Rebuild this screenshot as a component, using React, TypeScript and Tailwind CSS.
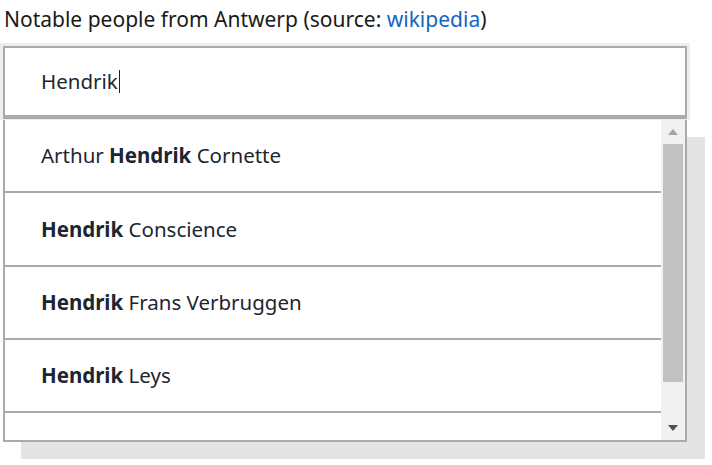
const people = [
  { before: "Arthur ", after: " Cornette" },
  { before: "", after: " Conscience" },
  { before: "", after: " Frans Verbruggen" },
  { before: "", after: " Leys" },
];

const Scrollbar = () => (
  <div className="flex w-[24px] flex-col bg-[#f1f1f1]">
    <div className="flex h-[24px] items-center justify-center">
      <svg width="10" height="6" viewBox="0 0 10 6">
        <path d="M0 6 L5 0 L10 6 Z" fill="#a3a3a3" />
      </svg>
    </div>
    <div className="mx-[2px] h-[238px] bg-[#c1c1c1]" />
    <div className="flex-1" />
    <div className="flex h-[24px] items-center justify-center">
      <svg width="10" height="6" viewBox="0 0 10 6">
        <path d="M0 0 L10 0 L5 6 Z" fill="#505050" />
      </svg>
    </div>
  </div>
);

export default function App() {
  return (
    <div
      className="w-[712px] h-[465px] bg-white"
      style={{ fontFamily: '"Noto Sans", "Open Sans", sans-serif' }}
    >
      <div className="pl-[4px] pt-[6px] pb-[10px] text-[21px] leading-[27px] text-[#1a1a1a]">
        Notable people from Antwerp (source:{" "}
        <a className="text-[#1565c0]" href="#">
          wikipedia
        </a>
        )
      </div>

      <div className="w-[690px] bg-[#eeeeee] p-[3px] pb-[1px]">
        <div className="flex h-[73px] items-center border-2 border-b-4 border-[#aaaaaa] bg-white pl-[36px] text-[20.5px] text-[#1b2631]">
          <span>Hendrik</span>
          <span className="ml-[1px] h-[23px] w-[1px] bg-[#1b2631]" />
        </div>
      </div>

      <div className="ml-[3px] flex h-[322px] w-[684px] border-x-2 border-b-2 border-[#aaaaaa] bg-white shadow-[18px_17px_0_0_#e4e4e4]">
        <ul className="flex-1 overflow-hidden">
          {people.map((p, i) => (
            <li
              key={i}
              className="flex h-[73.33px] items-center border-b-2 border-[#aaaaaa] pl-[36px] text-[20.5px] text-[#1b2631]"
            >
              <span className="whitespace-pre">
                {p.before}
                <b className="font-bold">Hendrik</b>
                {p.after}
              </span>
            </li>
          ))}
          <li className="h-[73.33px]" />
        </ul>
        <Scrollbar />
      </div>
    </div>
  );
}
